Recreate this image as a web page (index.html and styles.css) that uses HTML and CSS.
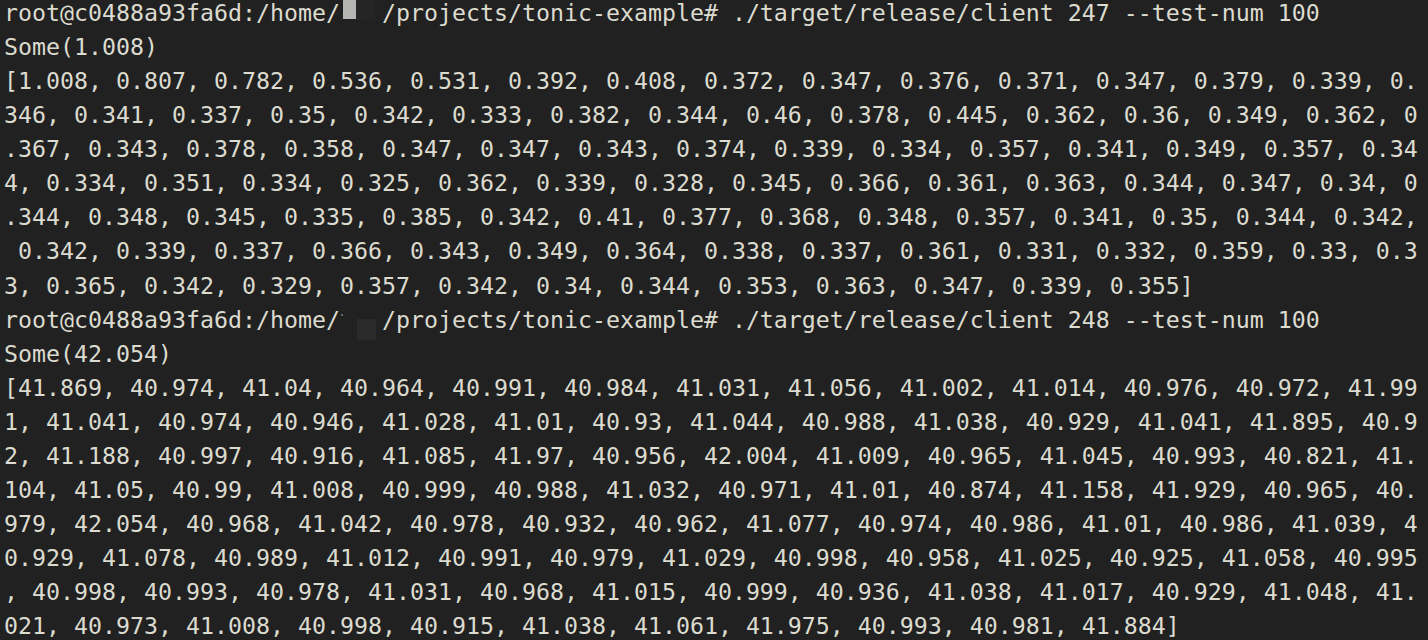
FILE: index.html
```html
<!DOCTYPE html>
<html>
<head>
<meta charset="utf-8">
<link rel="stylesheet" href="styles.css">
</head>
<body>
<div class="term">
<pre class="out">root@c0488a93fa6d:/home/   /projects/tonic-example# ./target/release/client 247 --test-num 100
Some(1.008)
[1.008, 0.807, 0.782, 0.536, 0.531, 0.392, 0.408, 0.372, 0.347, 0.376, 0.371, 0.347, 0.379, 0.339, 0.
346, 0.341, 0.337, 0.35, 0.342, 0.333, 0.382, 0.344, 0.46, 0.378, 0.445, 0.362, 0.36, 0.349, 0.362, 0
.367, 0.343, 0.378, 0.358, 0.347, 0.347, 0.343, 0.374, 0.339, 0.334, 0.357, 0.341, 0.349, 0.357, 0.34
4, 0.334, 0.351, 0.334, 0.325, 0.362, 0.339, 0.328, 0.345, 0.366, 0.361, 0.363, 0.344, 0.347, 0.34, 0
.344, 0.348, 0.345, 0.335, 0.385, 0.342, 0.41, 0.377, 0.368, 0.348, 0.357, 0.341, 0.35, 0.344, 0.342,
 0.342, 0.339, 0.337, 0.366, 0.343, 0.349, 0.364, 0.338, 0.337, 0.361, 0.331, 0.332, 0.359, 0.33, 0.3
3, 0.365, 0.342, 0.329, 0.357, 0.342, 0.34, 0.344, 0.353, 0.363, 0.347, 0.339, 0.355]
root@c0488a93fa6d:/home/   /projects/tonic-example# ./target/release/client 248 --test-num 100
Some(42.054)
[41.869, 40.974, 41.04, 40.964, 40.991, 40.984, 41.031, 41.056, 41.002, 41.014, 40.976, 40.972, 41.99
1, 41.041, 40.974, 40.946, 41.028, 41.01, 40.93, 41.044, 40.988, 41.038, 40.929, 41.041, 41.895, 40.9
2, 41.188, 40.997, 40.916, 41.085, 41.97, 40.956, 42.004, 41.009, 40.965, 41.045, 40.993, 40.821, 41.
104, 41.05, 40.99, 41.008, 40.999, 40.988, 41.032, 40.971, 41.01, 40.874, 41.158, 41.929, 40.965, 40.
979, 42.054, 40.968, 41.042, 40.978, 40.932, 40.962, 41.077, 40.974, 40.986, 41.01, 40.986, 41.039, 4
0.929, 41.078, 40.989, 41.012, 40.991, 40.979, 41.029, 40.998, 40.958, 41.025, 40.925, 41.058, 40.995
, 40.998, 40.993, 40.978, 41.031, 40.968, 41.015, 40.999, 40.936, 41.038, 41.017, 40.929, 41.048, 41.
021, 40.973, 41.008, 40.998, 40.915, 41.038, 41.061, 41.975, 40.993, 40.981, 41.884]</pre>
<div class="redact redact-light"></div>
<div class="redact redact-shade"></div>
<div class="redact redact-dark"></div>
<div class="redact redact-dot"></div>
</div>
</body>
</html>
```
FILE: styles.css
```css
html, body {
  margin: 0;
  padding: 0;
  background: #212121;
  height: 100%;
  overflow: hidden;
}
.term {
  position: relative;
  background: #212121;
  height: 640px;
  overflow: hidden;
}
.out {
  margin: -4px 0 0 0;
  padding: 0 0 0 4px;
  font-family: "DejaVu Sans Mono", "Liberation Mono", monospace;
  font-size: 23.25px;
  line-height: 34.06px;
  color: #dcdbcf;
  white-space: pre;
}
.redact {
  position: absolute;
}
.redact-light {
  left: 343px;
  top: 0;
  width: 13px;
  height: 19px;
  background: #b5b5b3;
}
.redact-shade {
  left: 356px;
  top: 0;
  width: 19px;
  height: 20px;
  background: #252525;
}
.redact-dark {
  left: 357px;
  top: 319px;
  width: 19px;
  height: 21px;
  background: #2a2a2a;
}
.redact-dot {
  left: 341px;
  top: 314px;
  width: 2px;
  height: 2px;
  background: #666;
}
```
